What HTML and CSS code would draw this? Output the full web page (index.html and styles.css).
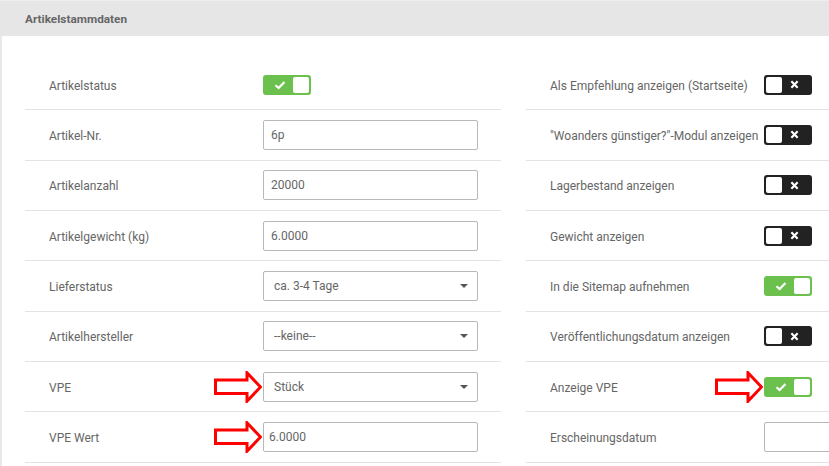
FILE: index.html
```html
<!DOCTYPE html>
<html lang="de">
<head>
<meta charset="utf-8">
<title>Artikelstammdaten</title>
<link rel="stylesheet" href="styles.css">
</head>
<body>
<div class="panel">
  <div class="panel-head">Artikelstammdaten</div>
  <div class="panel-body">
    <div class="col">
      <div class="row"><div class="label">Artikelstatus</div><div class="ctrl"><span class="toggle on"><svg class="ico" viewBox="0 0 12 10" width="12" height="10"><path d="M1.5 5.2 L4.6 8 L10.5 2" fill="none" stroke="#fff" stroke-width="2.2"/></svg><span class="knob"></span></span></div></div>
      <div class="row"><div class="label">Artikel-Nr.</div><div class="ctrl"><div class="input">6p</div></div></div>
      <div class="row"><div class="label">Artikelanzahl</div><div class="ctrl"><div class="input">20000</div></div></div>
      <div class="row"><div class="label">Artikelgewicht (kg)</div><div class="ctrl"><div class="input">6.0000</div></div></div>
      <div class="row"><div class="label">Lieferstatus</div><div class="ctrl"><div class="input select">ca. 3-4 Tage<span class="caret"></span></div></div></div>
      <div class="row"><div class="label">Artikelhersteller</div><div class="ctrl"><div class="input select">--keine--<span class="caret"></span></div></div></div>
      <div class="row"><div class="label">VPE</div><div class="ctrl"><svg class="arrow" viewBox="0 0 48 32" width="48" height="32"><path d="M1.5 9 H33 V1.8 L46.5 16 L33 30.2 V22.5 H1.5 Z" fill="#fff" stroke="#f00" stroke-width="3"/></svg><div class="input select">Stück<span class="caret"></span></div></div></div>
      <div class="row"><div class="label">VPE Wert</div><div class="ctrl"><svg class="arrow" viewBox="0 0 48 32" width="48" height="32"><path d="M1.5 9 H33 V1.8 L46.5 16 L33 30.2 V22.5 H1.5 Z" fill="#fff" stroke="#f00" stroke-width="3"/></svg><div class="input narrow">6.0000</div></div></div>
    </div>
    <div class="col">
      <div class="row"><div class="label">Als Empfehlung anzeigen (Startseite)</div><div class="ctrl"><span class="toggle off"><span class="knob"></span><svg class="ico" viewBox="0 0 10 10" width="9" height="9"><path d="M1.5 1.5 L8.5 8.5 M8.5 1.5 L1.5 8.5" fill="none" stroke="#fff" stroke-width="2.4"/></svg></span></div></div>
      <div class="row"><div class="label">"Woanders günstiger?"-Modul anzeigen</div><div class="ctrl"><span class="toggle off"><span class="knob"></span><svg class="ico" viewBox="0 0 10 10" width="9" height="9"><path d="M1.5 1.5 L8.5 8.5 M8.5 1.5 L1.5 8.5" fill="none" stroke="#fff" stroke-width="2.4"/></svg></span></div></div>
      <div class="row"><div class="label">Lagerbestand anzeigen</div><div class="ctrl"><span class="toggle off"><span class="knob"></span><svg class="ico" viewBox="0 0 10 10" width="9" height="9"><path d="M1.5 1.5 L8.5 8.5 M8.5 1.5 L1.5 8.5" fill="none" stroke="#fff" stroke-width="2.4"/></svg></span></div></div>
      <div class="row"><div class="label">Gewicht anzeigen</div><div class="ctrl"><span class="toggle off"><span class="knob"></span><svg class="ico" viewBox="0 0 10 10" width="9" height="9"><path d="M1.5 1.5 L8.5 8.5 M8.5 1.5 L1.5 8.5" fill="none" stroke="#fff" stroke-width="2.4"/></svg></span></div></div>
      <div class="row"><div class="label">In die Sitemap aufnehmen</div><div class="ctrl"><span class="toggle on"><svg class="ico" viewBox="0 0 12 10" width="12" height="10"><path d="M1.5 5.2 L4.6 8 L10.5 2" fill="none" stroke="#fff" stroke-width="2.2"/></svg><span class="knob"></span></span></div></div>
      <div class="row"><div class="label">Veröffentlichungsdatum anzeigen</div><div class="ctrl"><span class="toggle off"><span class="knob"></span><svg class="ico" viewBox="0 0 10 10" width="9" height="9"><path d="M1.5 1.5 L8.5 8.5 M8.5 1.5 L1.5 8.5" fill="none" stroke="#fff" stroke-width="2.4"/></svg></span></div></div>
      <div class="row"><div class="label">Anzeige VPE</div><div class="ctrl"><svg class="arrow" viewBox="0 0 48 32" width="48" height="32"><path d="M1.5 9 H33 V1.8 L46.5 16 L33 30.2 V22.5 H1.5 Z" fill="#fff" stroke="#f00" stroke-width="3"/></svg><span class="toggle on"><svg class="ico" viewBox="0 0 12 10" width="12" height="10"><path d="M1.5 5.2 L4.6 8 L10.5 2" fill="none" stroke="#fff" stroke-width="2.2"/></svg><span class="knob"></span></span></div></div>
      <div class="row"><div class="label">Erscheinungsdatum</div><div class="ctrl"><div class="input"></div></div></div>
    </div>
  </div>
</div>
</body>
</html>
```

FILE: styles.css
```css
html, body {
  margin: 0;
  padding: 0;
  overflow: hidden;
  background: #fff;
}
body {
  width: 829px;
  height: 466px;
  font-family: Roboto, "Liberation Sans", Arial, sans-serif;
  color: #666;
}
.panel {
  width: 829px;
  overflow: hidden;
}
.panel-head {
  height: 36px;
  box-sizing: border-box;
  background: #e6e6e6;
  border-top: 1px solid #ededed;
  padding-left: 25px;
  display: flex;
  align-items: center;
  font-size: 11.8px;
  font-weight: 700;
  color: #666;
}
.panel-body {
  display: flex;
  gap: 25px;
  padding: 24px 0 0 23px;
  border-left: 2px solid #e8e8e8;
  height: 430px;
  box-sizing: border-box;
}
.col {
  flex: 0 0 476px;
}
.row {
  height: 50.33px;
  box-sizing: border-box;
  border-bottom: 1px solid #e3e3e3;
  display: flex;
  align-items: center;
}
.label {
  width: 238px;
  flex: 0 0 238px;
  box-sizing: border-box;
  padding-left: 24px;
  padding-top: 2px;
  font-size: 12px;
  color: #666;
  white-space: nowrap;
}
.ctrl {
  position: relative;
  display: flex;
  align-items: center;
}
.input {
  width: 215px;
  height: 30px;
  box-sizing: border-box;
  border: 1px solid #b8b8b8;
  border-radius: 2px;
  padding: 0 7px;
  display: flex;
  align-items: center;
  font-size: 12px;
  color: #666;
  position: relative;
}
.input.select {
  padding-left: 10px;
}
.input.narrow {
  padding-left: 5px;
}
.caret {
  position: absolute;
  right: 9px;
  top: 50%;
  margin-top: -2px;
  width: 0;
  height: 0;
  border-left: 4px solid transparent;
  border-right: 4px solid transparent;
  border-top: 4px solid #555;
}
.toggle {
  width: 48px;
  height: 20px;
  box-sizing: border-box;
  border-radius: 3px;
  padding: 2px;
  display: flex;
  align-items: center;
  justify-content: space-between;
}
.toggle.on {
  background: #6cc04e;
}
.toggle.off {
  background: #222;
}
.knob {
  width: 16px;
  height: 16px;
  background: #fff;
  border-radius: 2px;
}
.toggle.on .ico {
  margin-left: 9px;
}
.toggle.off .ico {
  margin-right: 11px;
}
.arrow {
  position: absolute;
  right: calc(100% + 1px);
  top: 50%;
  margin-top: -16px;
}
```
